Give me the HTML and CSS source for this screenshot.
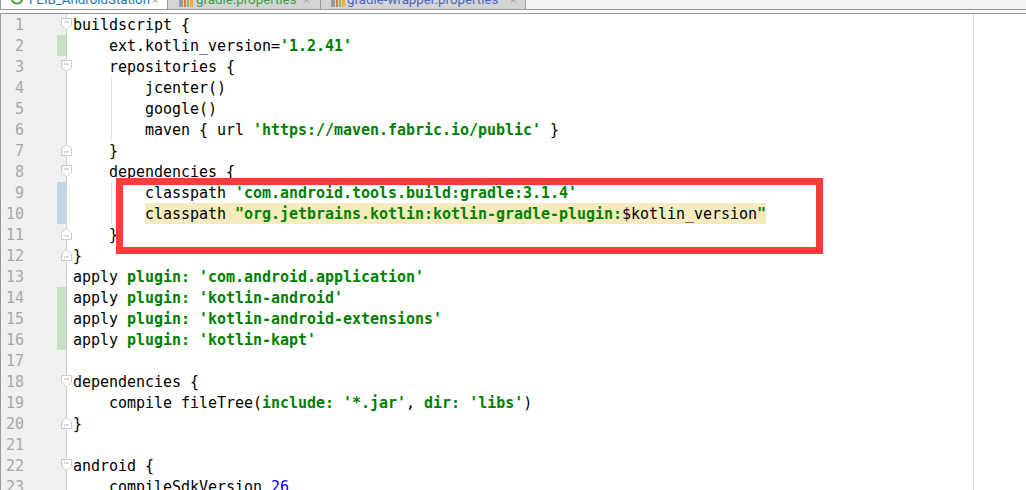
FILE: index.html
```html
<!DOCTYPE html>
<html lang="en">
<head>
<meta charset="utf-8">
<title>build.gradle</title>
<link rel="stylesheet" href="styles.css">
</head>
<body>
<div class="ide">
  <div class="tabs">
    <div class="tab tab-active">
      <svg class="ico ico-round" width="16" height="16" viewBox="0 0 16 16"><circle cx="8" cy="8" r="5.5" fill="#fff" stroke="#5da84a" stroke-width="2.2"/><circle cx="8" cy="8" r="2" fill="#8cc47c"/></svg>
      <span class="name name-blue">FEIB_AndroidStation</span><span class="x">×</span>
    </div>
    <div class="tab tab-a">
      <svg class="ico" width="14" height="16" viewBox="0 0 14 16"><rect x="0" y="0" width="4" height="16" fill="#9a9a9a"/><rect x="5" y="6" width="2" height="10" fill="#e8743b"/><rect x="8" y="2" width="2" height="14" fill="#8cb464"/><rect x="11" y="0" width="3" height="16" fill="#e8b04b"/></svg>
      <span class="name name-green">gradle.properties</span><span class="x">×</span>
    </div>
    <div class="tab tab-b">
      <svg class="ico" width="14" height="16" viewBox="0 0 14 16"><rect x="0" y="0" width="4" height="16" fill="#9a9a9a"/><rect x="5" y="6" width="2" height="10" fill="#e8743b"/><rect x="8" y="2" width="2" height="14" fill="#8cb464"/><rect x="11" y="0" width="3" height="16" fill="#e8b04b"/></svg>
      <span class="name name-indigo">gradle-wrapper.properties</span><span class="x">×</span>
    </div>
  </div>
  <div class="strip"></div>
  <div class="editor">
    <div class="margin"></div>
    <div class="line"><div class="gut"><span class="num">1</span><svg class="fold" width="11" height="12" viewBox="0 0 11 12"><path d="M.5.5h10v7l-5 4-5-4z" fill="#fff" stroke="#ccc"/><path d="M3 4h5" stroke="#bbb"/></svg></div><div class="code">buildscript {</div></div>
    <div class="line"><div class="gut"><span class="num">2</span><i class="mark mark-g"></i></div><div class="code">    ext.kotlin_version=<b>'1.2.41'</b></div></div>
    <div class="line"><div class="gut"><span class="num">3</span><svg class="fold" width="11" height="12" viewBox="0 0 11 12"><path d="M.5.5h10v7l-5 4-5-4z" fill="#fff" stroke="#ccc"/><path d="M3 4h5" stroke="#bbb"/></svg></div><div class="code">    repositories {</div></div>
    <div class="line guide"><div class="gut"><span class="num">4</span></div><div class="code">        jcenter()</div></div>
    <div class="line guide"><div class="gut"><span class="num">5</span></div><div class="code">        google()</div></div>
    <div class="line guide"><div class="gut"><span class="num">6</span></div><div class="code">        maven { url <b>'https://maven.fabric.io/public'</b> }</div></div>
    <div class="line"><div class="gut"><span class="num">7</span><svg class="fold" width="11" height="12" viewBox="0 0 11 12"><path d="M.5 11.500h10v-7l-5-4-5 4z" fill="#fff" stroke="#ccc"/><path d="M3 8h5" stroke="#bbb"/></svg></div><div class="code">    }</div></div>
    <div class="line"><div class="gut"><span class="num">8</span><svg class="fold" width="11" height="12" viewBox="0 0 11 12"><path d="M.5.5h10v7l-5 4-5-4z" fill="#fff" stroke="#ccc"/><path d="M3 4h5" stroke="#bbb"/></svg></div><div class="code">    dependencies {</div></div>
    <div class="line guide"><div class="gut"><span class="num">9</span><i class="mark mark-b"></i></div><div class="code">        classpath <b>'com.android.tools.build:gradle:3.1.4'</b></div></div>
    <div class="line guide"><div class="gut"><span class="num">10</span><i class="mark mark-b"></i></div><div class="code">        <span class="hl">classpath <b>"org.jetbrains.kotlin:kotlin-gradle-plugin:</b>$kotlin_version<b>"</b></span></div></div>
    <div class="line"><div class="gut"><span class="num">11</span><svg class="fold" width="11" height="12" viewBox="0 0 11 12"><path d="M.5 11.500h10v-7l-5-4-5 4z" fill="#fff" stroke="#ccc"/><path d="M3 8h5" stroke="#bbb"/></svg></div><div class="code">    }</div></div>
    <div class="line"><div class="gut"><span class="num">12</span><svg class="fold" width="11" height="12" viewBox="0 0 11 12"><path d="M.5 11.500h10v-7l-5-4-5 4z" fill="#fff" stroke="#ccc"/><path d="M3 8h5" stroke="#bbb"/></svg></div><div class="code">}</div></div>
    <div class="line"><div class="gut"><span class="num">13</span></div><div class="code">apply <b>plugin:</b> <b>'com.android.application'</b></div></div>
    <div class="line"><div class="gut"><span class="num">14</span><i class="mark mark-g"></i></div><div class="code">apply <b>plugin:</b> <b>'kotlin-android'</b></div></div>
    <div class="line"><div class="gut"><span class="num">15</span><i class="mark mark-g"></i></div><div class="code">apply <b>plugin:</b> <b>'kotlin-android-extensions'</b></div></div>
    <div class="line"><div class="gut"><span class="num">16</span><i class="mark mark-g"></i></div><div class="code">apply <b>plugin:</b> <b>'kotlin-kapt'</b></div></div>
    <div class="line"><div class="gut"><span class="num">17</span></div><div class="code"></div></div>
    <div class="line"><div class="gut"><span class="num">18</span><svg class="fold" width="11" height="12" viewBox="0 0 11 12"><path d="M.5.5h10v7l-5 4-5-4z" fill="#fff" stroke="#ccc"/><path d="M3 4h5" stroke="#bbb"/></svg></div><div class="code">dependencies {</div></div>
    <div class="line"><div class="gut"><span class="num">19</span></div><div class="code">    compile fileTree(<b>include:</b> <b>'*.jar'</b>, <b>dir:</b> <b>'libs'</b>)</div></div>
    <div class="line"><div class="gut"><span class="num">20</span><svg class="fold" width="11" height="12" viewBox="0 0 11 12"><path d="M.5 11.500h10v-7l-5-4-5 4z" fill="#fff" stroke="#ccc"/><path d="M3 8h5" stroke="#bbb"/></svg></div><div class="code">}</div></div>
    <div class="line"><div class="gut"><span class="num">21</span></div><div class="code"></div></div>
    <div class="line"><div class="gut"><span class="num">22</span><svg class="fold" width="11" height="12" viewBox="0 0 11 12"><path d="M.5.5h10v7l-5 4-5-4z" fill="#fff" stroke="#ccc"/><path d="M3 4h5" stroke="#bbb"/></svg></div><div class="code">android {</div></div>
    <div class="line"><div class="gut"><span class="num">23</span></div><div class="code">    compileSdkVersion <span class="n">26</span></div></div>
    <div class="callout"></div>
  </div>
</div>
</body>
</html>
```
FILE: styles.css
```css
html, body {
  margin: 0;
  padding: 0;
  height: 490px;
  overflow: hidden;
  background: #fff;
}
.ide {
  width: 1026px;
  height: 490px;
  overflow: hidden;
  display: flex;
  flex-direction: column;
}
.tabs {
  flex: none;
  height: 9px;
  display: flex;
  align-items: flex-end;
  background: #f2f2f2;
  border-bottom: 1px solid #999;
  overflow: hidden;
  font-family: Roboto, sans-serif;
  font-size: 13.3px;
  line-height: 20px;
}
.tab {
  height: 9px;
  display: flex;
  align-items: flex-end;
  flex: none;
  box-sizing: border-box;
  background: #d4d4d4;
  border-right: 1px solid #999;
  white-space: nowrap;
}
.tab-active { width: 168px; background: #fff; padding-left: 8px; border-left: 1px solid #999; }
.tab-a { width: 153px; padding-left: 11px; }
.tab-b { width: 205px; padding-left: 10px; }
.ico { flex: none; margin-bottom: 2px; margin-right: 2px; }
.ico-round { margin-bottom: 3px; margin-right: 4px; }
.tab-a .ico { margin-right: 3px; }
.name { display: block; flex: none; margin-bottom: -1px; }
.name-blue { color: #2473c6; width: 123px; }
.name-green { color: #3f9c4b; width: 107px; }
.name-indigo { color: #4a68c8; width: 163px; }
.x { color: #aaa; font-size: 12px; margin-bottom: -1px; }
.strip { flex: none; height: 3px; background: #fff; }
.editor {
  position: relative;
  border-top: 1px solid #999;
  border-left: 1px solid #999;
  flex: 1;
  min-height: 0;
  font-family: "DejaVu Sans Mono", monospace;
  font-size: 15px;
  letter-spacing: -0.03px;
  line-height: 23px;
  color: #000;
}
.margin {
  position: absolute;
  left: 972px;
  top: 0;
  bottom: 0;
  width: 1px;
  background: #dcdcdc;
}
.line { display: flex; height: 21px; position: relative; }
.gut {
  position: relative;
  width: 65px;
  flex: none;
  background: #f0f0f0;
  border-right: 1px solid #d0d0d0;
}
.num {
  display: block;
  width: 23px;
  text-align: right;
  color: #a8a8a8;
}
.mark { position: absolute; left: 56px; top: 0; bottom: 0; width: 9px; }
.mark-g { background: #c9dfc5; }
.mark-b { background: #c3d5e6; }
.fold { position: absolute; left: 60px; top: 4px; }
.code {
  padding-left: 6px;
  white-space: pre;
  flex: 1;
}
.guide::before {
  content: "";
  position: absolute;
  left: 110px;
  top: 0;
  bottom: 0;
  width: 1px;
  background: #e4e4e4;
}
b { color: #008000; font-weight: 700; }
.n { color: #0000ff; }
.hl {
  display: inline-block;
  background: linear-gradient(#f5ebbf, #f5ebbf) 0 0 / 100% 21px no-repeat;
}
.callout {
  position: absolute;
  left: 115px;
  top: 164px;
  width: 693px;
  height: 62px;
  border: 7px solid #ff3b3b;
}
```
